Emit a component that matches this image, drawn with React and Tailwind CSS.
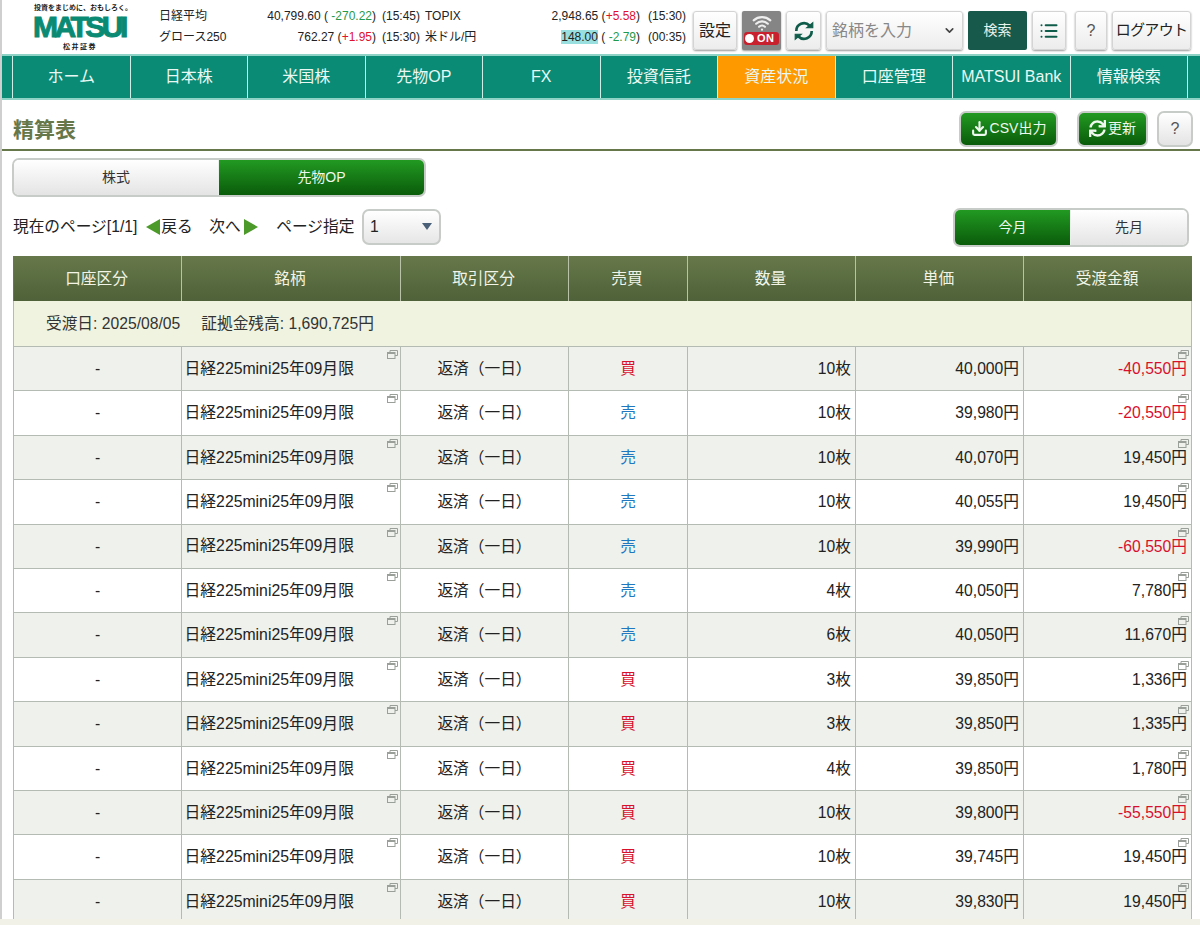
import React from "react";
import { Download, List, Wifi, ChevronDown } from "lucide-react";
import { FaSync } from "react-icons/fa";

const NAV = ["ホーム", "日本株", "米国株", "先物OP", "FX", "投資信託", "資産状況", "口座管理", "MATSUI Bank", "情報検索"];
const HEAD = ["口座区分", "銘柄", "取引区分", "売買", "数量", "単価", "受渡金額"];
const ROWS = [
  ["買", "10枚", "40,000円", "-40,550円"],
  ["売", "10枚", "39,980円", "-20,550円"],
  ["売", "10枚", "40,070円", "19,450円"],
  ["売", "10枚", "40,055円", "19,450円"],
  ["売", "10枚", "39,990円", "-60,550円"],
  ["売", "4枚", "40,050円", "7,780円"],
  ["売", "6枚", "40,050円", "11,670円"],
  ["買", "3枚", "39,850円", "1,336円"],
  ["買", "3枚", "39,850円", "1,335円"],
  ["買", "4枚", "39,850円", "1,780円"],
  ["買", "10枚", "39,800円", "-55,550円"],
  ["買", "10枚", "39,745円", "19,450円"],
  ["買", "10枚", "39,830円", "19,450円"],
];

const COLS = "grid grid-cols-[168px_219px_168px_119px_168px_168px_168px]";
const GRAY_BTN = "flex items-center justify-center h-[39px] rounded-[3px] border border-[#d4d4d4] bg-gradient-to-b from-white to-[#ececec] shadow-[0_1px_2px_#999] text-[#222]";
const GREEN_BTN = "flex items-center justify-center h-[36px] rounded-[7px] border-2 border-[#c8ccc8] bg-gradient-to-b from-[#229a22] to-[#0a5c0a] text-[#eef8ee] text-[14px]";

const WindowIcon = ({ className }) => (
  <svg className={className} width="11" height="9" viewBox="0 0 11 9" fill="none" stroke="#9a9f9a" strokeWidth="1">
    <path d="M3 2.5V0.5H10.5V5.5H8" />
    <rect x="0.5" y="2.5" width="7.5" height="6" />
    <path d="M0.5 3.5H8" />
  </svg>
);

const Segment = ({ left, right, activeLeft, className }) => {
  const on = "bg-gradient-to-b from-[#229a22] to-[#0a5c0a] text-[#eef8ee]";
  const off = "bg-gradient-to-b from-white to-[#e4e4e4] text-[#333]";
  return (
    <div className={`flex h-[39px] rounded-[7px] border-2 border-[#c8ccc8] overflow-hidden text-[14px] ${className}`}>
      <div className={`flex items-center justify-center border-r border-[#e8efe8] ${left.w} ${activeLeft ? on : off}`}>{left.label}</div>
      <div className={`flex items-center justify-center flex-1 ${activeLeft ? off : on}`}>{right.label}</div>
    </div>
  );
};

const Ticker = () => (
  <div className="ml-[159px] grid grid-cols-[60px_157px_49px_60px_155px_50px] grid-rows-[21px_21px] text-[12px] leading-[21px] text-[#222] mt-[6px] h-[42px] whitespace-nowrap">
    <div>日経平均</div>
    <div className="text-right">40,799.60 ( <span className="text-[#1f9a4a]">-270.22</span>)</div>
    <div className="pl-[6px]">(15:45)</div>
    <div>TOPIX</div>
    <div className="text-right">2,948.65 (<span className="text-[#e0102f]">+5.58</span>)</div>
    <div className="pl-[8px]">(15:30)</div>
    <div>グロース250</div>
    <div className="text-right">762.27 (<span className="text-[#e0102f]">+1.95</span>)</div>
    <div className="pl-[6px]">(15:30)</div>
    <div>米ドル/円</div>
    <div className="text-right"><span className="bg-[#9adfe0]">148.00</span> ( <span className="text-[#1f9a4a]">-2.79</span>)</div>
    <div className="pl-[8px]">(00:35)</div>
  </div>
);

const Logo = () => (
  <div className="absolute left-[32px] top-[3px] w-[94px] flex flex-col items-center text-[#1b1b1b]">
    <div className="ml-[8px] text-[7px] leading-[9px] font-bold whitespace-nowrap">投資をまじめに、おもしろく。</div>
    <div className="text-[30px] leading-[29px] font-bold tracking-[-3.5px] text-[#0a8a73] [-webkit-text-stroke:1px_#0a8a73] whitespace-nowrap">MATSUI</div>
    <div className="ml-[2px] mt-[1px] text-[7px] leading-[10px] font-bold tracking-[1.5px]">松井証券</div>
  </div>
);

const Toolbar = () => (
  <div className="absolute left-[693px] top-[11px] flex">
    <div className={`${GRAY_BTN} w-[44px] text-[16px]`}>設定</div>
    <div className="ml-[5px] w-[39px] h-[39px] rounded-[2px] bg-[#858585] flex flex-col items-center shadow-[0_1px_2px_#999]">
      <Wifi className="text-[#eee] mt-[2px]" size={20} strokeWidth={2.6} />
      <div className="mt-[-1px] w-[35px] h-[13px] rounded-[3px] bg-[#c8202c] text-white text-[11px] leading-[13px] font-bold flex items-center pl-[1px] tracking-[0.5px]">
        <span className="w-[9px] h-[9px] rounded-full bg-white mr-[3px]" />ON
      </div>
    </div>
    <div className={`${GRAY_BTN} ml-[5px] w-[35px]`}>
      <svg width="22" height="22" viewBox="0 0 20 20" fill="none" stroke="#0f5c4a" strokeWidth="2.4">
        <path d="M3 10a7 7 0 0 1 12-5" />
        <path d="M17 10a7 7 0 0 1-12 5" />
        <path d="M12.5 7H18V2.5z" fill="#0f5c4a" strokeWidth="1" />
        <path d="M7.5 13H2V17.5z" fill="#0f5c4a" strokeWidth="1" />
      </svg>
    </div>
    <div className={`${GRAY_BTN} ml-[5px] w-[137px] !justify-between px-[5px] text-[16px] !text-[#888]`}>
      銘柄を入力
      <ChevronDown size={13} strokeWidth={3} className="text-[#444] mr-[1px]" />
    </div>
    <div className="ml-[5px] w-[59px] h-[39px] rounded-[2px] bg-[#17594a] text-[#e6f2ee] text-[14px] flex items-center justify-center">検索</div>
    <div className={`${GRAY_BTN} ml-[5px] w-[34px]`}>
      <List size={20} strokeWidth={2.4} className="text-[#0f5c4a]" />
    </div>
    <div className={`${GRAY_BTN} ml-[9px] w-[32px] text-[16px] !text-[#555]`}>?</div>
    <div className={`${GRAY_BTN} ml-[5px] w-[79px] text-[15px] whitespace-nowrap tracking-[-0.7px]`}>ログアウト</div>
  </div>
);

const Row = ({ row, index }) => {
  const [side, qty, price, amount] = row;
  const zebra = index % 2 === 0 ? "bg-[#eef1ec]" : "bg-white";
  const cell = "relative flex items-center border-r border-[#b4bbb2]";
  return (
    <div className={`${COLS} h-[44.42px] border-t border-[#b4bbb2] border-l ${zebra} text-[#222]`}>
      <div className={`${cell} justify-center`}>-</div>
      <div className={`${cell} pl-[2.5px] text-[15.8px]`}>
        日経225mini25年09月限
        <WindowIcon className="absolute right-[2px] top-[3px]" />
      </div>
      <div className={`${cell} justify-center`}>返済（一日）</div>
      <div className={`${cell} justify-center ${side === "買" ? "text-[#d8102c]" : "text-[#1f78c0]"}`}>{side}</div>
      <div className={`${cell} justify-end pr-[4px]`}>{qty}</div>
      <div className={`${cell} justify-end pr-[4px]`}>{price}</div>
      <div className={`${cell} justify-end pr-[4px] ${amount.startsWith("-") ? "text-[#d8102c]" : ""}`}>
        {amount}
        <WindowIcon className="absolute right-[2px] top-[3px]" />
      </div>
    </div>
  );
};

export default function App() {
  return (
    <div className="h-[925px] w-[1200px] overflow-hidden flex flex-col bg-[#f1f1e8] text-[15.7px] font-['Liberation_Sans','Noto_Sans_CJK_JP',sans-serif]">
      <div className="h-[919px] shrink-0 overflow-hidden bg-white border-l-2 border-[#cfcfcf]">
        <div className="relative h-[54px] ml-[-2px] flex">
          <Logo />
          <Ticker />
          <Toolbar />
        </div>

        <div className="flex h-[46px] bg-[#098b76] border-y-2 border-[#8fd3c6] ml-0 text-[#e9f8f3] text-[16px]">
          <div className="w-[10px]" />
          {NAV.map((n) => (
            <div
              key={n}
              className={`w-[117.5px] flex items-center justify-center border-l border-[#cfeee6] whitespace-nowrap ${n === "資産状況" ? "bg-[#ff9900]" : ""}`}
            >
              {n}
            </div>
          ))}
          <div className="flex-1 border-l border-[#cfeee6]" />
        </div>

        <div className="flex items-center h-[51px] border-b-2 border-[#66774a] pr-[7px] pl-[11px] pt-[1px]">
          <h1 className="text-[21px] font-bold text-[#66774a] mt-[9px]">精算表</h1>
          <div className={`${GREEN_BTN} ml-auto w-[99px] mt-[7px] gap-[2px]`}>
            <Download size={17} strokeWidth={3} />CSV出力
          </div>
          <div className={`${GREEN_BTN} ml-[19px] w-[71px] mt-[7px] gap-[2px]`}>
            <FaSync size={17} />更新
          </div>
          <div className="ml-[9px] mt-[7px] w-[36px] h-[36px] rounded-[7px] border-2 border-[#c8ccc8] bg-gradient-to-b from-white to-[#e4e4e4] flex items-center justify-center text-[16px] text-[#555]">?</div>
        </div>

        <Segment
          className="mt-[7px] ml-[10px] w-[414px]"
          activeLeft={false}
          left={{ label: "株式", w: "w-[205px]" }}
          right={{ label: "先物OP" }}
        />

        <div className="flex items-center h-[39px] mt-[11px] pl-[11px] pb-[2px] text-[#222]">
          現在のページ[1/1]
          <span className="ml-[9px] w-0 h-0 border-y-[8px] border-y-transparent border-r-[14px] border-r-[#4c9a2a]" />
          <span className="ml-[1px]">戻る</span>
          <span className="ml-[16.6px]">次へ</span>
          <span className="ml-[3.6px] w-0 h-0 border-y-[8px] border-y-transparent border-l-[14px] border-l-[#4c9a2a]" />
          <span className="ml-[18px]">ページ指定</span>
          <div className="ml-[7.5px] w-[79px] h-[36px] rounded-[7px] border-2 border-[#c8ccc8] bg-gradient-to-b from-white to-[#e6e6e6] flex items-center justify-between pl-[6px] pr-[7px]">
            1
            <span className="w-0 h-0 border-x-[5px] border-x-transparent border-t-[7px] border-t-[#4a6078]" />
          </div>
          <Segment
            className="ml-auto mr-[11px] w-[236px] self-start"
            activeLeft
            left={{ label: "今月", w: "w-[116px]" }}
            right={{ label: "先月" }}
          />
        </div>

        <div className="ml-[11px] w-[1179px] mt-[9px]">
          <div className={`${COLS} h-[45px] border-l border-[#67794a] bg-gradient-to-b from-[#67794a] to-[#4e6138] text-[#f1f4e6]`}>
            {HEAD.map((h) => (
              <div key={h} className="flex items-center justify-center pr-[2px] border-r border-[#b9c2a8] last:border-r-0">{h}</div>
            ))}
          </div>
          <div className="h-[45px] bg-[#eff3e0] flex items-center pl-[32px] border-x border-[#b4bbb2] text-[#333]">
            受渡日: 2025/08/05<span className="ml-[21px]">証拠金残高: 1,690,725円</span>
          </div>
          {ROWS.map((r, i) => <Row key={i} row={r} index={i} />)}
        </div>
      </div>
    </div>
  );
}
